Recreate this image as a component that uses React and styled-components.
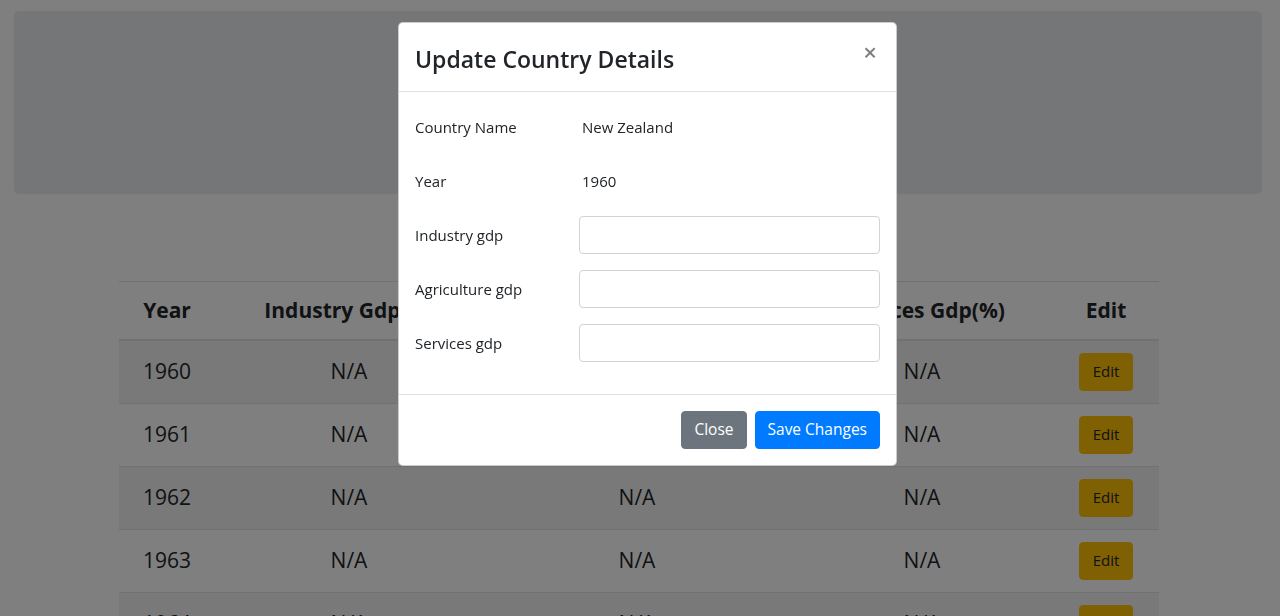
import styled, { createGlobalStyle } from "styled-components";

const GlobalStyle = createGlobalStyle`
  html, body {
    margin: 0;
    padding: 0;
    background: #fff;
    font-family: "Open Sans", "Noto Sans", sans-serif;
    color: #212529;
    overflow: hidden;
  }
  * {
    box-sizing: border-box;
  }
`;

const rows = [1960, 1961, 1962, 1963, 1964];

const fields = [
  { label: "Country Name", value: "New Zealand" },
  { label: "Year", value: "1960" },
  { label: "Industry gdp" },
  { label: "Agriculture gdp" },
  { label: "Services gdp" },
];

const App = () => {
  return (
    <>
      <GlobalStyle />
      <Page>
        <Jumbotron />
        <Table>
          <colgroup>
            <col style={{ width: 96 }} />
            <col style={{ width: 268 }} />
            <col style={{ width: 308 }} />
            <col style={{ width: 262 }} />
            <col style={{ width: 106 }} />
          </colgroup>
          <thead>
            <tr>
              <Th>Year</Th>
              <Th>Industry Gdp(%)</Th>
              <Th>Agriculture Gdp(%)</Th>
              <Th>Services Gdp(%)</Th>
              <Th>Edit</Th>
            </tr>
          </thead>
          <tbody>
            {rows.map((year, i) => (
              <Tr key={year} $striped={i % 2 === 0}>
                <Td>{year}</Td>
                <Td>N/A</Td>
                <Td>N/A</Td>
                <Td>N/A</Td>
                <Td>
                  <EditBtn>Edit</EditBtn>
                </Td>
              </Tr>
            ))}
          </tbody>
        </Table>
      </Page>

      <Backdrop />

      <Modal>
        <ModalHeader>
          <ModalTitle>Update Country Details</ModalTitle>
          <CloseX>×</CloseX>
        </ModalHeader>
        <ModalBody>
          {fields.map((f) => (
            <FormRow key={f.label}>
              <Label>{f.label}</Label>
              {f.value ? <PlainText>{f.value}</PlainText> : <Input type="text" />}
            </FormRow>
          ))}
        </ModalBody>
        <ModalFooter>
          <Button $bg="#6c757d">Close</Button>
          <Button $bg="#007bff">Save Changes</Button>
        </ModalFooter>
      </Modal>
    </>
  );
};

const Page = styled.div`
  padding: 11px 18px 0 14px;
  height: 616px;
  overflow: hidden;
`;

const Jumbotron = styled.div`
  height: 183px;
  background: #e9ecef;
  border-radius: 5px;
  margin-bottom: 87px;
`;

const Table = styled.table`
  width: 1040px;
  margin-left: 105px;
  border-collapse: collapse;
  table-layout: fixed;
  font-size: 21px;
  line-height: 1.5;
`;

const Th = styled.th`
  text-align: center;
  font-weight: 700;
  padding: 13px 12px 12px;
  border-top: 1px solid #dee2e6;
  border-bottom: 2px solid #dee2e6;
  white-space: nowrap;
`;

const Tr = styled.tr`
  background: ${(p) => (p.$striped ? "rgba(0, 0, 0, 0.05)" : "transparent")};
`;

const Td = styled.td`
  text-align: center;
  padding: 12px;
  height: 63px;
  border-top: 1px solid #dee2e6;
  font-weight: 400;
`;

const EditBtn = styled.button`
  font-family: inherit;
  font-size: 15px;
  line-height: 1.5;
  height: 38px;
  padding: 0 12.5px;
  color: #212529;
  background: #ffc107;
  border: 1px solid #ffc107;
  border-radius: 4px;
`;

const Backdrop = styled.div`
  position: fixed;
  inset: 0;
  background: rgba(0, 0, 0, 0.5);
`;

const Modal = styled.div`
  position: fixed;
  top: 22px;
  left: 398px;
  width: 499px;
  background: #fff;
  border: 1px solid rgba(0, 0, 0, 0.2);
  border-radius: 5px;
  display: flex;
  flex-direction: column;
`;

const ModalHeader = styled.div`
  display: flex;
  align-items: flex-start;
  justify-content: space-between;
  padding: 18px 16px 14px;
  border-bottom: 1px solid #dee2e6;
`;

const ModalTitle = styled.h4`
  margin: 0;
  font-size: 23px;
  font-weight: 600;
  line-height: 36px;
  color: #212529;
`;

const CloseX = styled.span`
  font-size: 24px;
  font-weight: 600;
  line-height: 1;
  color: #000;
  opacity: 0.5;
  margin-top: -1px;
  margin-right: 3px;
`;

const ModalBody = styled.div`
  padding: 16px;
`;

const FormRow = styled.div`
  display: grid;
  grid-template-columns: 164px 1fr;
  align-items: center;
  height: 38px;
  margin-bottom: 16px;
`;

const Label = styled.label`
  font-size: 15px;
  line-height: 1.5;
  color: #212529;
`;

const PlainText = styled.div`
  font-size: 15px;
  line-height: 1.5;
  padding-left: 3px;
  color: #212529;
`;

const Input = styled.input`
  height: 38px;
  width: 100%;
  border: 1px solid #ced4da;
  border-radius: 4px;
  padding: 6px 12px;
  font-size: 15px;
  background: #fff;
`;

const ModalFooter = styled.div`
  display: flex;
  justify-content: flex-end;
  align-items: center;
  gap: 8px;
  padding: 16px;
  border-top: 1px solid #dee2e6;
`;

const Button = styled.button`
  font-family: inherit;
  font-size: 15.5px;
  line-height: 1.5;
  height: 38px;
  padding: 0 12px;
  color: #fff;
  background: ${(p) => p.$bg};
  border: 1px solid ${(p) => p.$bg};
  border-radius: 4px;
`;

export default App;
